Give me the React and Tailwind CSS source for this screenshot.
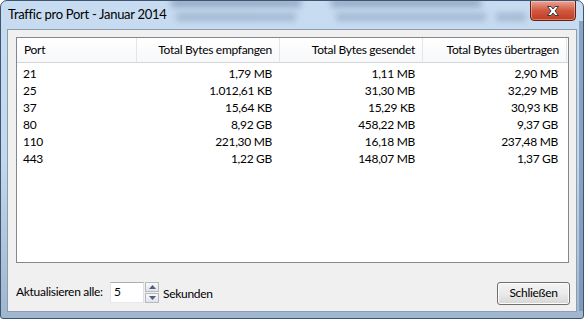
import React from 'react';

const rows = [
  ['21', '1,79 MB', '1,11 MB', '2,90 MB'],
  ['25', '1.012,61 KB', '31,30 MB', '32,29 MB'],
  ['37', '15,64 KB', '15,29 KB', '30,93 KB'],
  ['80', '8,92 GB', '458,22 MB', '9,37 GB'],
  ['110', '221,30 MB', '16,18 MB', '237,48 MB'],
  ['443', '1,22 GB', '148,07 MB', '1,37 GB'],
];

const cols = [
  { title: 'Port', w: 'w-[120px]', align: 'pl-[7px] justify-start' },
  { title: 'Total Bytes empfangen', w: 'w-[143px]', align: 'pr-[7px] justify-end' },
  { title: 'Total Bytes gesendet', w: 'w-[143px]', align: 'pr-[7px] justify-end' },
  { title: 'Total Bytes übertragen', w: 'w-[144px]', align: 'pr-[7px] justify-end' },
];

function CloseButton() {
  return (
    <div className="absolute right-[7px] top-[-1px] w-[46px] h-[21px] rounded-b-[4px] border border-[#6b1d12] bg-gradient-to-b from-[#e8a493] via-[#d0583f] to-[#c23b20] flex items-center justify-center shadow-[inset_0_0_0_1px_rgba(255,255,255,0.35)]">
      <svg width="14" height="12" viewBox="0 0 14 12">
        <path
          d="M1.5 1.5 H5 L7 4 L9 1.5 H12.5 L9 6 L12.5 10.5 H9 L7 8 L5 10.5 H1.5 L5 6 Z"
          fill="#ffffff"
          stroke="#3b3b3b"
          strokeWidth="1"
          strokeLinejoin="round"
        />
      </svg>
    </div>
  );
}

export default function App() {
  return (
    <div className="w-[584px] h-[319px] bg-white tracking-[-0.3px]" style={{ fontFamily: 'Lato, "Noto Sans", sans-serif' }}>
      <div className="relative w-[584px] h-[319px] rounded-t-[7px] rounded-b-[3px] border border-[#3e5470] bg-gradient-to-b from-[#c8dcf1] via-[#c3d8ee] to-[#9fb6cf] overflow-hidden flex flex-col">
        {/* blurred stuff behind the glass */}
        <div className="absolute left-[170px] top-[-2px] w-[130px] h-[8px] bg-[#6f89a8] opacity-60 blur-[3px]" />
        <div className="absolute left-[330px] top-[-2px] w-[150px] h-[8px] bg-[#6f89a8] opacity-60 blur-[3px]" />
        <div className="absolute left-[175px] top-[12px] w-[120px] h-[8px] bg-[#7d96b3] opacity-50 blur-[3px]" />
        <div className="absolute left-[335px] top-[12px] w-[150px] h-[8px] bg-[#7d96b3] opacity-50 blur-[3px]" />
        <div className="absolute left-[495px] top-[12px] w-[30px] h-[8px] bg-[#7d96b3] opacity-50 blur-[3px]" />
        <div className="absolute right-0 top-[20px] w-[4px] h-[290px] bg-[#6f8db0] opacity-70" />

        {/* title bar */}
        <div className="relative h-[28px] flex items-center pl-[7px] pb-[1px]">
          <span className="text-[13px] text-black leading-none">Traffic pro Port - Januar 2014</span>
          <CloseButton />
        </div>

        {/* client area */}
        <div className="relative ml-[6px] mr-[6px] h-[283px] border border-[#8e9cab] bg-[#f0f0f0] flex flex-col pt-[7px] pl-[8px] pr-[7px] text-[12px] text-black">
          <div className="h-[226px] border border-[#828790] bg-white flex flex-col">
            <div className="flex h-[25px] border-b border-[#d5d5d5] bg-gradient-to-b from-white to-[#f7f8fa]">
              {cols.map((c) => (
                <div key={c.title} className={`${c.w} ${c.align} border-r border-[#e3e5e8] flex items-center`}>
                  <span className="leading-none">{c.title}</span>
                </div>
              ))}
            </div>
            <div className="flex flex-col pt-[2px]">
              {rows.map((r) => (
                <div key={r[0]} className="flex h-[17px] items-center leading-none">
                  <div className="w-[120px] pl-[6px]">{r[0]}</div>
                  <div className="w-[143px] text-right pr-[8px]">{r[1]}</div>
                  <div className="w-[143px] text-right pr-[8px]">{r[2]}</div>
                  <div className="w-[144px] text-right pr-[9px]">{r[3]}</div>
                </div>
              ))}
            </div>
          </div>

          <div className="flex items-center mt-[17px] h-[24px]">
            <span className="w-[94px] shrink-0 leading-none whitespace-nowrap">Aktualisieren alle:</span>
            <div className="w-[34px] h-[21px] border border-[#abadb3] border-l-[#e2e3ea] border-r-[#dbdfe6] border-b-[#e3e9ef] bg-white flex items-center pl-[3px] leading-none">5</div>
            <div className="ml-[1px] flex flex-col gap-[1px]">
              <div className="w-[14px] h-[10px] border border-[#b5b9c0] bg-gradient-to-b from-[#f8f8f8] to-[#e2e4e8] flex items-center justify-center">
                <svg width="7" height="4" viewBox="0 0 7 4"><path d="M0 4 L3.5 0 L7 4 Z" fill="#4e5f82" /></svg>
              </div>
              <div className="w-[14px] h-[10px] border border-[#b5b9c0] bg-gradient-to-b from-[#f8f8f8] to-[#e2e4e8] flex items-center justify-center">
                <svg width="7" height="4" viewBox="0 0 7 4"><path d="M0 0 L3.5 4 L7 0 Z" fill="#4e5f82" /></svg>
              </div>
            </div>
            <span className="ml-[4px] mt-[4px] leading-none">Sekunden</span>
            <button className="ml-auto mr-[-1px] mt-[2px] w-[73px] h-[23px] rounded-[3px] border border-[#707070] bg-gradient-to-b from-[#f3f3f3] via-[#ebebeb] to-[#d6d6d6] shadow-[inset_0_0_0_1px_#fcfcfc] flex items-center justify-center leading-none">
              Schließen
            </button>
          </div>
        </div>
      </div>
    </div>
  );
}
